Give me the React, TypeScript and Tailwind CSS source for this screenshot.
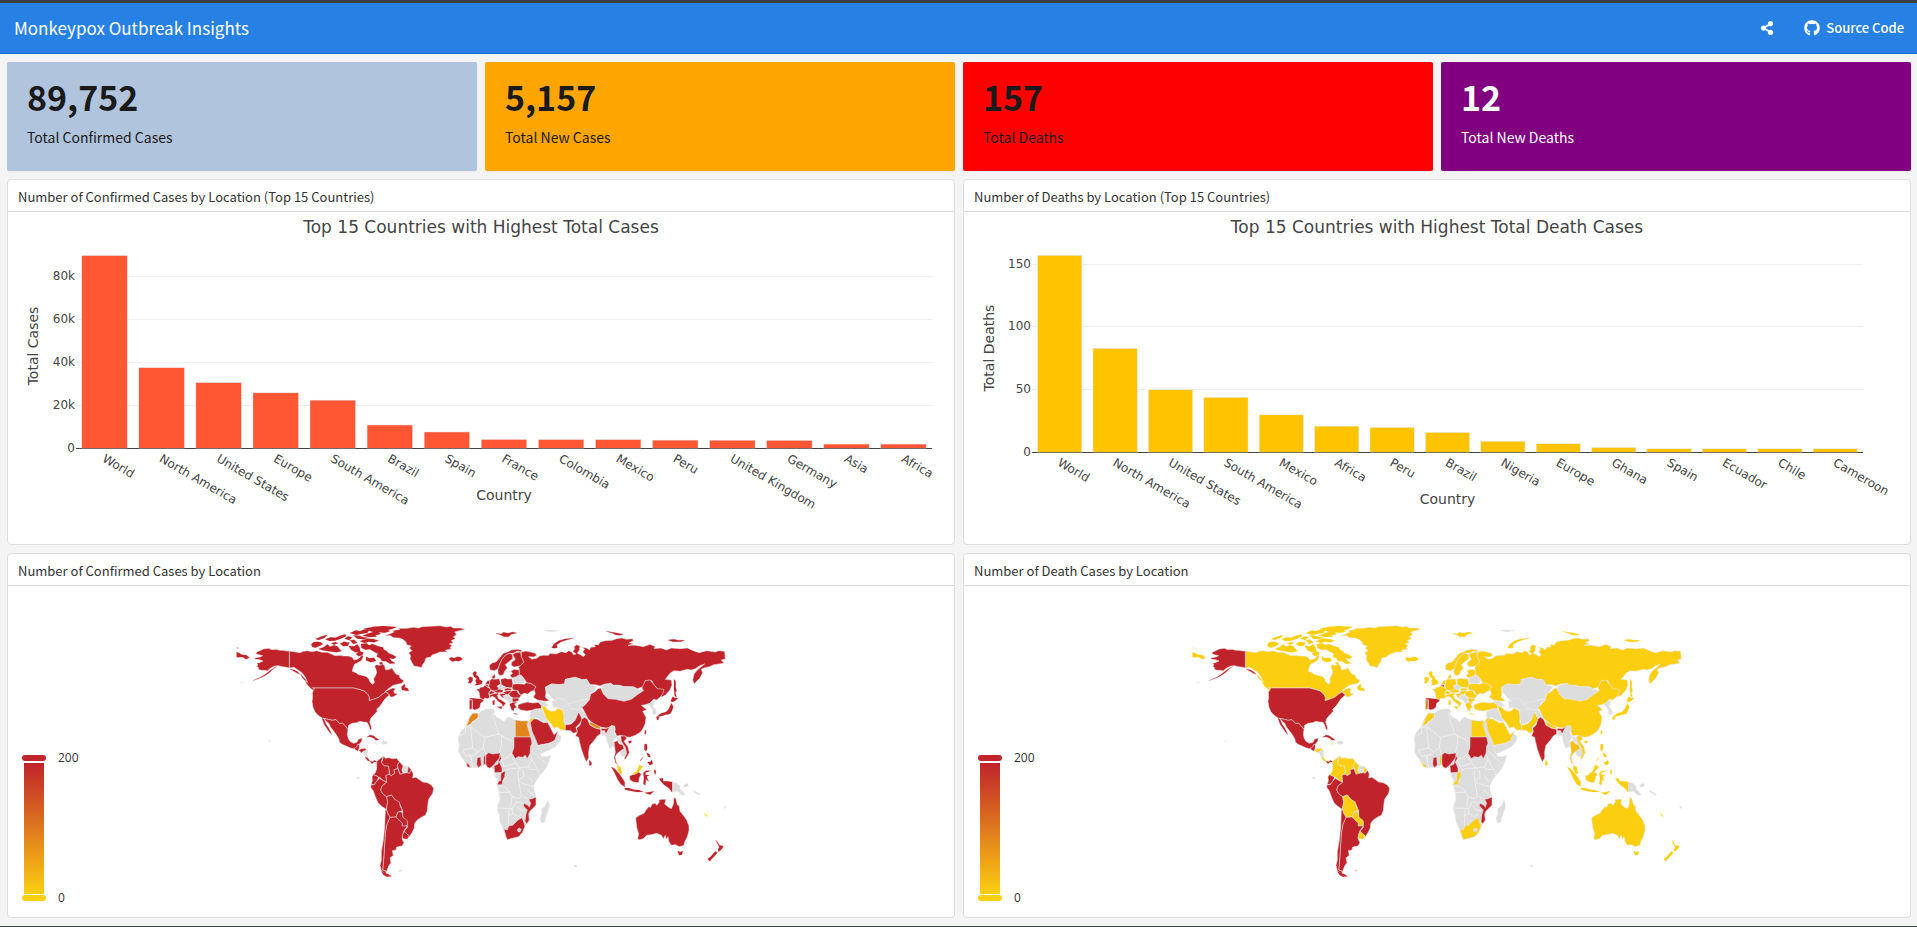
import React from "react";
import { FaGithub, FaShareAlt } from "react-icons/fa";

type Bar = [label: string, value: number];

const stats = [
  { value: "89,752", label: "Total Confirmed Cases", tone: "bg-[#b0c4de] text-[#1a1a1a]" },
  { value: "5,157", label: "Total New Cases", tone: "bg-[#ffa500] text-[#1a1a1a]" },
  { value: "157", label: "Total Deaths", tone: "bg-[#ff0000] text-[#1a1a1a]" },
  { value: "12", label: "Total New Deaths", tone: "bg-[#800080] text-white" },
];

const caseBars: Bar[] = [
  ["World", 89752], ["North America", 37600], ["United States", 30700], ["Europe", 25900],
  ["South America", 22500], ["Brazil", 10950], ["Spain", 7700], ["France", 4250],
  ["Colombia", 4190], ["Mexico", 4160], ["Peru", 3910], ["United Kingdom", 3870],
  ["Germany", 3800], ["Asia", 2080], ["Africa", 2070],
];

const deathBars: Bar[] = [
  ["World", 157], ["North America", 83], ["United States", 50], ["South America", 44],
  ["Mexico", 30], ["Africa", 21], ["Peru", 20], ["Brazil", 16], ["Nigeria", 9],
  ["Europe", 7], ["Ghana", 4], ["Spain", 3], ["Ecuador", 3], ["Chile", 3], ["Cameroon", 3],
];

interface BarChartProps {
  title: string;
  yTitle: string;
  bars: Bar[];
  ticks: [text: string, value: number][];
  color: string;
  left: number;
  right: number;
  base: number;
  unit: number;
}

function BarChart({ title, yTitle, bars, ticks, color, left, right, base, unit }: BarChartProps) {
  const pitch = (right - left) / bars.length;
  return (
    <svg
      viewBox="0 0 946 330"
      className="block h-auto w-full font-['Verdana','DejaVu_Sans',sans-serif]"
      fill="#444"
      role="img"
      aria-label={title}
    >
      <text x="473" y="21" fontSize="17" textAnchor="middle">{title}</text>
      {ticks.map(([text, value]) => {
        const y = Math.round(base - value * unit);
        return (
          <g key={text}>
            {value > 0 && <rect x={left} y={y} width={right - left} height="1" fill="#eee" />}
            <text x={left - 1} y={y + 4} fontSize="12" textAnchor="end">{text}</text>
          </g>
        );
      })}
      <rect x={left} y={base} width={right - left} height="1" fill="#444" />
      {bars.map(([label, value], i) => {
        const x = left + i * pitch;
        return (
          <g key={label}>
            <rect
              x={x + pitch * 0.1}
              y={base + 0.5 - value * unit}
              width={pitch * 0.8}
              height={value * unit}
              fill={color}
              stroke="#e5ecf6"
              strokeWidth="0.5"
            />
            <text transform={`translate(${x + pitch / 2 - 3} ${base + 13}) rotate(30)`} fontSize="12">
              {label}
            </text>
          </g>
        );
      })}
      <rect x={left} y={base} width={right - left} height="1" fill="#444" fillOpacity="0.6" />
      <text x={(left + right) / 2} y={base + 52} fontSize="14" textAnchor="middle">Country</text>
      <text transform={`translate(30 ${base / 2 + 16}) rotate(-90)`} fontSize="14" textAnchor="middle">
        {yTitle}
      </text>
    </svg>
  );
}

const fills: Record<string, string> = {
  r: "#c1232b",
  y: "#fcce10",
  o: "#e2861b",
  a: "#f9bd13",
  g: "#dddddd",
};

/* Each shape: outline, case level, death level. */
type Shape = [outline: string, cases: string, deaths: string];

const americas: Shape[] = [
  // Canada
  ["M208 123L222 125 240 128 250 124 262 122 276 125 290 122 306 127 322 127 336 133 345 137 360 136 372 138 385 138 397 142 402 150 412 148 420 142 426 134 430 140 424 152 410 160 404 162 399 174 397 184 408 188 414 193 430 197 440 200 447 208 450 216 458 223 463 218 461 205 466 198 470 188 468 178 464 170 468 164 478 166 488 162 494 168 497 180 508 178 516 174 522 184 528 192 538 196 540 204 552 212 546 220 532 223 520 226 508 234 494 246 505 240 518 234 527 236 521 244 524 250 534 252 520 260 512 262 508 254 498 246 488 252 476 262 460 268 447 272 448 262 444 254 434 244 420 239 400 234 284 234 272 230 262 216 256 202 246 188 234 180 222 172 208 174Z", "r", "y"],
  // Alaska
  ["M208 123L200 123 190 121 180 121 168 118 156 119 145 115 130 117 122 121 112 125 107 130 115 134 128 137 120 141 106 143 104 147 118 149 129 153 118 158 110 160 114 165 110 169 116 173 114 178 124 181 134 181 142 183 148 177 156 172 164 168 176 167 186 170 195 171 208 174Z", "r", "r"],
  // Greenland
  ["M494 77L508 72 522 66 516 62 540 58 534 55 560 55 580 52 596 54 606 50 630 49 660 47 680 51 692 49 700 54 722 54 735 58 718 62 704 66 710 74 700 80 706 86 694 92 700 98 688 102 696 106 690 114 697 116 676 121 682 126 660 126 648 131 638 134 632 141 618 144 614 156 608 164 604 173 594 170 582 168 576 158 570 146 572 138 566 128 576 122 568 114 574 108 560 104 558 96 548 88 536 84 520 83 512 77Z", "r", "y"],
  // United States
  ["M284 234L400 234 420 239 434 244 444 254 448 262 447 272 460 268 476 262 488 252 498 246 508 255 500 262 494 268 486 280 480 288 476 292 470 298 472 304 462 314 452 326 449 336 454 350 455 360 450 358 446 346 441 337 430 336 420 334 410 338 396 340 386 346 384 358 376 348 368 340 358 340 348 329 336 331 325 328 316 326 306 324 300 320 290 312 284 304 279 292 276 275 278 262 277 248Z", "r", "r"],
  // Mexico
  ["M312 326L325 328 336 331 348 329 358 340 368 340 376 348 384 358 382 374 385 386 390 394 400 400 411 397 415 388 427 384 425 394 420 401 413 405 412 415 404 417 392 414 380 409 366 403 358 396 357 388 350 376 340 362 332 352 326 340 318 333Z", "r", "r"],
  // Central America
  ["M403 414L410 411 412 404 418 403 418 414 414 424 406 420Z", "r", "r"],
  ["M416 420L424 416 434 415 441 420 430 424 424 429Z", "r", "y"],
  ["M428 427L441 419 443 432 442 442 436 441Z", "g", "g"],
  // Colombia
  ["M470 455L476 449 484 443 491 438 486 448 485 458 492 467 505 468 508 480 507 495 498 496 500 517 490 512 480 503 470 498 460 494 466 488 470 476Z", "r", "y"],
  // Venezuela and the Guianas
  ["M491 438L496 445 506 443 518 446 530 445 538 455 532 466 534 476 522 479 524 490 514 497 508 493 508 480 505 468 492 467 485 458Z", "r", "y"],
  ["M538 455L550 468 546 480 550 490 540 493 536 480 532 466Z", "r", "y"],
  ["M550 468L565 469 562 488 550 490 546 480Z", "g", "g"],
  ["M565 469L574 480 568 490 562 488Z", "r", "y"],
  // Ecuador, Peru
  ["M456 500L460 494 470 498 476 503 470 514 462 525 454 522 457 512Z", "r", "r"],
  ["M453 524L462 525 470 514 478 505 490 512 500 517 486 528 482 540 488 551 500 560 503 575 499 598 485 589 474 578 466 560 460 543 452 532Z", "r", "r"],
  // Brazil
  ["M498 496L508 493 514 497 524 490 522 479 534 476 540 493 550 490 562 488 568 490 574 480 580 492 578 504 588 502 600 510 608 516 622 518 634 525 641 535 638 550 626 568 624 580 622 602 616 616 604 622 592 630 584 640 583 654 576 668 568 680 552 664 562 652 561 638 548 630 548 602 538 580 524 568 514 555 500 560 488 551 482 540 486 528 500 517Z", "r", "r"],
  // Bolivia, Paraguay
  ["M500 560L514 555 524 568 538 576 541 590 548 602 534 606 528 621 510 622 504 612 499 598 503 575Z", "r", "y"],
  ["M534 606L546 606 549 622 562 632 562 644 554 651 546 648 547 640 528 621Z", "r", "y"],
  // Argentina, Uruguay
  ["M510 622L528 621 547 640 546 648 562 648 552 662 548 674 546 686 552 698 546 708 530 711 528 720 517 722 520 736 510 744 513 758 506 768 500 784 488 780 490 760 492 735 494 700 496 670 500 645Z", "r", "r"],
  ["M552 664L568 678 562 688 548 686 547 676Z", "r", "y"],
  // Chile
  ["M496 600L499 598 504 612 510 622 500 645 496 670 494 700 492 735 490 760 488 780 500 785 496 792 484 782 480 766 484 750 484 725 490 690 494 650Z", "r", "r"],
];

const americanIslands: Shape[] = [
  ["M50 126L58 130 66 134 80 136 88 143 78 148 68 141 50 142Z", "r", "y"],
  ["M50 113L56 114 52 115Z", "r", "y"],
  // Aleutians and the Alaska panhandle
  ["M170 169L156 180 150 187 138 195 126 202 98 212 122 202 137 192 152 180Z", "r", "r"],
  ["M210 177L222 179 233 185 240 193 232 190 222 184Z", "r", "r"],
  ["M60 218L72 216 66 219Z", "g", "g"],
  // Pacific coast of Canada
  ["M242 192L252 204 260 212 254 211 246 202Z", "r", "y"],
  ["M256 214L270 222 284 241 274 236 264 226Z", "r", "y"],
  // Newfoundland
  ["M544 231L553 222 556 228 552 232 562 234 567 243 560 242 546 240Z", "r", "y"],
  // Baffin
  ["M423 102L440 100 447 106 458 102 474 109 488 112 492 119 500 123 506 130 518 134 529 141 520 147 508 144 514 152 526 160 510 161 498 154 486 153 480 144 470 140 474 131 462 125 450 118 436 119 424 113Z", "r", "y"],
  // Victoria and Banks
  ["M274 103L280 97 290 95 302 97 309 102 298 108 286 113 276 110Z", "r", "y"],
  ["M296 117L312 111 322 103 330 110 342 106 352 109 358 117 365 123 350 127 336 125 322 123 308 121Z", "r", "y"],
  // Parry Islands
  ["M286 87L306 79 322 75 314 83 296 90Z", "r", "y"],
  ["M316 88L332 82 346 83 360 77 376 73 378 79 362 86 344 92 328 93Z", "r", "y"],
  ["M334 100L346 96 354 100 342 104Z", "r", "y"],
  ["M360 101L372 95 388 98 384 107 370 109Z", "r", "y"],
  ["M386 108L402 109 412 103 419 113 421 125 406 127 394 120Z", "r", "y"],
  ["M408 132L418 124 430 127 428 135 416 139Z", "r", "y"],
  ["M438 140L448 145 462 143 468 153 452 157 438 151Z", "r", "y"],
  ["M478 158L486 156 488 162 480 163Z", "r", "y"],
  // Ellesmere and its neighbours
  ["M390 69L408 61 420 64 434 58 448 60 442 69 424 71 410 75Z", "r", "y"],
  ["M432 56L460 50 490 48 530 51 516 57 504 60 510 64 494 68 476 67 482 72 466 76 470 80 448 81 428 77 446 70 460 66 448 62Z", "r", "y"],
  ["M400 76L418 77 428 81 446 84 430 88 412 86Z", "r", "y"],
  ["M420 94L430 89 444 86 460 87 476 92 462 97 446 95 434 99Z", "r", "y"],
  ["M390 91L402 89 412 98 400 102Z", "r", "y"],
  ["M374 86L384 79 396 82 388 91Z", "r", "y"],
  // Iceland
  ["M687 146L694 142 702 145 712 140 722 142 728 148 716 154 706 152 697 155 691 150Z", "r", "y"],
  // Baja California
  ["M306 325L312 328 318 342 326 354 336 374 328 366 320 354 312 342Z", "r", "r"],
  ["M435 441L443 443 449 453 444 453Z", "r", "y"],
  ["M449 453L458 455 464 451 470 456 462 456 456 461Z", "r", "r"],
  // Caribbean
  ["M440 382L450 375 460 377 468 383 477 390 468 391 460 384 450 380Z", "r", "r"],
  ["M484 396L490 392 502 396 500 402 486 403Z", "g", "g"],
  ["M466 400L472 401 469 404Z", "g", "y"],
  // Tierra del Fuego, Falklands
  ["M484 784L496 790 504 792 514 799 500 800 490 794Z", "r", "r"],
  ["M534 783L540 779 547 781 540 785Z", "g", "g"],
  // Hawaii, Galapagos
  ["M146 391L151 394 148 397Z", "g", "g"],
  ["M408 502L416 502 418 506 410 505Z", "g", "g"],
];

const africa: Shape[] = [
  ["M68 308L85 311 95 302 108 297 130 297 134 304 131 312 140 322 152 328 162 335 168 326 176 321 196 330 220 334 238 332 244 350 256 376 262 400 268 424 275 440 290 440 302 436 298 452 288 474 270 496 260 510 252 525 252 540 258 560 258 586 240 603 238 618 237 634 228 644 222 660 208 679 196 684 172 688 162 664 158 650 150 636 148 615 142 598 144 585 150 566 148 548 142 524 143 508 136 500 134 484 126 472 108 464 92 470 82 472 62 474 48 460 34 440 25 424 28 406 24 386 32 366 46 350 54 328Z", "g", "g"],
];

const oldWorld: Shape[] = [
  // Morocco, Egypt, Sudan
  ["M68 310L84 310 85 321 78 328 66 336 62 343 48 348 54 338 58 324Z", "o", "y"],
  ["M196 330L214 333 232 332 236 346 230 340 242 381 196 381Z", "o", "y"],
  ["M192 381L242 381 246 400 242 408 240 430 232 446 226 436 218 442 204 440 196 446 186 430 192 412Z", "r", "r"],
  // West Africa
  ["M108 434L116 428 128 432 150 429 150 442 140 454 132 464 120 475 112 472 107 462Z", "r", "r"],
  ["M150 434L154 446 148 456 156 474 156 487 134 488 132 468 144 462Z", "r", "r"],
  ["M82 443L92 441 94 466 84 473 80 462Z", "r", "r"],
  ["M101 440L106 435 107 462 101 464Z", "r", "y"],
  ["M48 458L56 462 62 474 52 470Z", "r", "y"],
  ["M153 490L166 482 164 500 158 512 156 524 142 524 146 514 152 512Z", "r", "y"],
  // Southern Africa
  ["M236 568L246 566 258 561 258 585 250 594 240 603 236 612 238 630 230 642 225 634 228 612 232 600 220 588 222 580 234 586 238 592 242 580Z", "r", "r"],
  ["M162 657L172 660 176 648 188 646 204 630 216 623 221 636 225 648 218 666 206 680 190 684 172 689 168 680Z", "r", "y"],
  ["M202 658L208 654 214 658 210 666 204 665Z", "g", "g"],
  // France, Iberia
  ["M78 237L88 237 90 232 100 231 104 226 114 232 124 238 118 246 116 252 120 262 112 266 104 264 102 269 90 266 88 250 86 244Z", "r", "y"],
  ["M58 264L70 264 90 266 102 269 100 274 92 280 90 292 84 297 74 300 67 297 67 270 59 269Z", "r", "r"],
  ["M58 270L67 270 66 298 58 298Z", "r", "o"],
  ["M104 224L112 223 116 229 114 232Z", "r", "r"],
  ["M106 222L112 212 120 211 118 224Z", "r", "y"],
  // Germany, Denmark
  ["M120 211L126 206 134 208 148 206 152 222 142 228 148 238 138 244 124 241 116 229 118 222Z", "r", "y"],
  ["M126 200L134 192 136 198 134 206 127 206Z", "r", "y"],
  // Czechia, Poland
  ["M142 228L152 224 162 228 168 234 156 238 148 238Z", "g", "g"],
  ["M152 208L166 204 172 207 186 206 188 218 189 228 184 234 168 232 154 224Z", "r", "y"],
  // Alps
  ["M134 243L148 238 160 240 158 247 142 249 132 246Z", "r", "y"],
  ["M116 248L124 242 134 246 128 252 118 253Z", "r", "y"],
  // Italy
  ["M119 256L128 252 142 249 148 252 142 256 146 266 154 270 168 280 164 284 158 292 156 283 144 274 134 262 126 259 120 263Z", "r", "y"],
  // Central Europe and the Balkans
  ["M162 238L172 234 186 236 184 240 166 243Z", "r", "y"],
  ["M160 246L170 243 182 241 184 246 172 254 162 251Z", "r", "y"],
  ["M148 252L162 250 170 256 158 257 168 268 154 261Z", "r", "y"],
  ["M160 258L172 255 180 259 186 268 184 278 178 280 174 272 164 267Z", "g", "g"],
  ["M176 252L186 242 200 240 206 252 214 255 208 264 190 264 182 260Z", "r", "y"],
  ["M186 265L206 264 206 272 196 276 188 276Z", "r", "y"],
  ["M178 282L188 277 202 276 194 282 200 292 192 296 192 304 184 300Z", "r", "y"],
  // Ukraine, Belarus, Baltics
  ["M189 222L206 221 222 223 230 218 242 220 258 230 254 240 240 246 234 252 222 250 212 256 204 242 190 240 186 234Z", "r", "y"],
  ["M190 206L202 196 214 196 224 208 220 220 206 221 190 219Z", "g", "g"],
  ["M180 196L188 190 182 184 192 178 208 180 208 194 198 200 186 204Z", "r", "y"],
  // Nordics
  ["M118 166L128 158 138 156 150 142 160 130 172 126 184 120 200 118 214 120 216 126 200 124 190 130 178 130 166 136 156 148 150 160 144 176 134 182 120 180Z", "r", "y"],
  ["M144 178L150 160 156 148 166 136 178 130 188 134 188 146 176 156 166 164 172 174 164 184 160 194 150 197 144 190Z", "r", "y"],
  ["M188 134L196 128 212 126 214 140 222 156 210 168 192 171 184 166 184 158 196 148Z", "r", "y"],
  // Russia
  ["M214 126L228 123 242 126 256 130 260 136 252 141 236 140 246 148 262 144 268 138 280 136 296 136 300 130 318 132 334 125 348 128 356 122 366 126 370 134 378 132 368 124 374 118 372 110 380 104 390 108 388 120 382 130 392 134 400 140 406 134 398 126 404 118 396 112 410 114 418 120 422 112 436 110 432 104 446 104 450 96 466 92 486 91 500 86 516 84 530 88 548 86 550 92 538 98 552 102 534 106 556 106 580 110 600 103 616 110 612 116 632 114 650 120 664 114 690 116 712 114 730 122 748 128 770 122 796 126 806 122 824 124 826 147 814 150 822 160 806 162 792 164 778 170 762 174 754 178 758 188 750 204 740 214 732 222 728 210 732 192 742 180 754 170 764 162 748 168 736 176 724 180 712 178 690 184 672 182 660 190 646 208 664 210 666 224 660 240 646 256 632 262 638 246 622 236 610 222 606 212 586 212 580 230 562 236 550 230 536 230 520 230 510 226 490 226 484 221 464 222 450 228 436 224 420 224 410 208 396 209 376 202 346 208 344 222 326 224 304 222 286 232 288 248 286 262 298 272 284 274 262 270 250 262 256 250 252 240 258 230 242 220 230 218 224 208 214 196 208 194 208 180 206 172 222 156 214 140Z", "r", "y"],
  // Turkey, Caucasus
  ["M204 284L216 280 232 276 248 279 264 277 274 284 274 296 256 297 246 301 230 303 212 300 204 294Z", "r", "y"],
  ["M262 271L284 275 296 288 284 288 272 284Z", "g", "g"],
  // Levant and Iraq
  ["M242 306L256 298 274 296 280 308 288 320 296 336 276 332 256 322 244 328 240 318Z", "g", "g"],
  ["M238 332L242 326 250 323 250 332 240 340Z", "y", "y"],
  // Arabia
  ["M241 338L252 326 262 328 280 338 292 337 300 350 306 362 312 374 324 364 320 380 314 392 296 400 264 406 256 386 246 364Z", "r", "y"],
  ["M264 407L296 401 304 416 284 426 268 432Z", "g", "g"],
  ["M296 401L314 392 322 370 334 380 330 394 316 410 304 416Z", "g", "g"],
  // Iran
  ["M274 287L286 290 292 298 304 304 318 302 322 294 338 300 343 318 341 336 348 348 347 361 332 360 324 352 310 354 302 340 288 324 282 308Z", "y", "y"],
  // Central Asia
  ["M286 232L304 222 326 224 344 222 346 208 376 202 396 209 410 208 420 224 440 230 432 244 420 252 418 266 400 268 386 274 372 276 352 282 342 268 322 264 316 274 304 262 290 246Z", "g", "g"],
  ["M306 272L316 274 322 264 342 268 356 286 372 300 348 306 338 298 322 292 310 294Z", "g", "g"],
  ["M342 268L352 282 372 276 400 270 418 268 398 290 396 300 376 298 364 294Z", "g", "g"],
  ["M340 302L362 296 376 298 396 300 384 312 376 330 362 340 344 342Z", "g", "g"],
  ["M386 298L398 302 414 322 412 330 396 324 392 316Z", "g", "g"],
  // Mongolia
  ["M452 234L464 224 482 220 490 226 510 226 520 230 536 230 552 232 562 238 580 242 562 254 544 268 522 274 496 268 474 266 460 252Z", "g", "g"],
  // China
  ["M396 292L404 286 418 270 422 252 434 246 444 236 452 234 460 252 474 266 496 268 522 274 544 268 562 254 580 242 576 234 586 212 600 210 610 222 622 236 642 238 638 252 630 262 620 270 610 268 600 280 586 284 574 286 584 294 590 300 578 304 588 322 586 340 580 354 572 366 556 376 540 382 526 380 512 376 500 378 494 364 488 350 470 354 456 352 440 348 424 336 414 326 408 314Z", "r", "y"],
  // Pakistan, India, Nepal
  ["M346 345L364 342 376 330 386 306 394 322 396 330 388 342 378 352 382 366 370 370 362 362 346 361Z", "r", "y"],
  ["M396 326L404 322 414 330 420 346 436 354 452 358 452 372 442 378 432 392 420 406 416 424 416 444 409 456 402 440 394 418 388 394 386 382 376 378 382 366 380 354 390 346Z", "r", "r"],
  ["M454 355L468 356 484 349 474 362 468 374 464 362 454 362Z", "r", "r"],
  ["M420 335L434 342 452 352 450 357 436 353 420 344Z", "o", "y"],
  ["M454 362L464 366 468 378 456 376Z", "g", "g"],
  // Southeast Asia
  ["M468 374L476 356 484 346 494 348 496 358 492 370 500 380 490 392 494 414 488 408 480 416 472 396Z", "g", "g"],
  ["M500 380L514 384 520 398 530 410 532 428 524 440 514 438 508 424 520 420 514 402 502 392Z", "g", "g"],
  ["M492 396L502 392 508 402 518 404 522 416 510 424 500 432 496 440 498 454 504 466 496 458 492 444 496 426Z", "r", "a"],
  ["M512 378L526 378 530 386 522 394 534 410 538 428 528 446 522 448 530 430 526 412 514 394Z", "r", "y"],
  ["M538 498L548 494 556 492 566 486 574 492 568 504 566 518 550 516 540 510Z", "r", "y"],
  ["M666 516L680 520 690 528 690 536 706 554 696 556 682 544 666 546Z", "g", "g"],
  // Korea
  ["M594 284L604 276 612 272 612 284 608 290 616 296 620 308 614 314 608 312 608 300 602 292Z", "g", "g"],
  // Australia
  ["M557 624L568 616 582 610 588 600 596 590 602 592 606 582 616 580 620 586 628 576 626 570 636 568 648 568 644 582 656 592 664 596 670 582 672 562 678 566 682 584 688 588 690 604 700 616 710 630 717 648 717 662 712 680 704 696 702 706 688 710 676 704 664 706 656 694 654 680 648 688 646 676 640 686 634 676 620 670 604 674 590 676 580 686 566 690 563 684 566 672 560 652Z", "r", "y"],
];

const oldWorldIslands: Shape[] = [
  // Madagascar
  ["M294 570L299 586 294 604 288 620 284 636 274 638 270 626 276 610 275 596 286 588Z", "g", "g"],
  // British Isles
  ["M68 190L74 184 80 187 78 194 86 200 88 208 97 214 95 222 84 225 74 226 80 220 76 212 80 206 72 200Z", "r", "y"],
  ["M54 206L60 200 68 203 68 212 62 220 54 219 58 212Z", "r", "y"],
  // Mediterranean
  ["M142 290L156 290 154 297Z", "r", "y"],
  ["M128 272L134 271 133 284 128 284Z", "r", "y"],
  ["M190 310L204 312 196 313Z", "r", "y"],
  // Arctic Ocean
  ["M305 113L312 102 326 92 344 87 372 84 350 90 334 95 320 104 322 113 312 115Z", "r", "y"],
  ["M468 64L484 66 496 68 520 73 508 76 496 74 488 70Z", "r", "y"],
  ["M654 90L672 88 684 91 704 91 692 95 668 95Z", "r", "y"],
  ["M138 70L154 72 160 67 174 70 188 66 200 69 184 73 176 80 162 80 154 76Z", "r", "y"],
  ["M280 62L300 60 326 62 304 65Z", "g", "g"],
  // Sakhalin and Japan
  ["M672 208L677 214 677 232 680 242 676 248 680 262 674 258 672 236Z", "r", "y"],
  ["M662 274L668 260 676 264 684 264 676 272 668 276Z", "r", "y"],
  ["M664 280L670 290 666 302 660 312 646 314 636 318 620 320 634 310 648 306 656 298Z", "r", "y"],
  ["M620 320L628 321 624 331 620 328Z", "r", "y"],
  // Hainan, Sri Lanka, Taiwan
  ["M534 394L544 392 544 398 538 400Z", "r", "y"],
  ["M418 450L425 458 424 466 418 466Z", "r", "y"],
  ["M586 360L589 362 587 374 584 370Z", "r", "y"],
  // Malaysia
  ["M502 466L512 472 516 492 508 490 503 478Z", "y", "y"],
  ["M548 492L560 484 568 464 578 470 566 486 552 494Z", "y", "y"],
  // Indonesia
  ["M484 471L494 476 508 492 518 506 524 516 524 530 512 522 502 506 494 488Z", "r", "y"],
  ["M524 534L536 534 552 539 566 540 580 546 560 546 540 542 526 539Z", "r", "y"],
  ["M580 488L588 482 602 482 586 488 586 494 598 496 590 500 596 514 588 508 586 526 580 522 582 506Z", "r", "y"],
  ["M584 548L600 546 612 544 600 554Z", "r", "y"],
  ["M614 478L618 484 616 494 612 486Z", "r", "y"],
  ["M628 506L638 504 640 514 652 514 666 516 666 546 656 534 642 524 634 516Z", "r", "y"],
  // Melanesia
  ["M700 526L712 520 716 528 704 532Z", "g", "g"],
  ["M730 540L752 554 748 556 732 546Z", "g", "g"],
  ["M761 610L764 611 773 618 771 620Z", "y", "y"],
  ["M820 592L828 588 826 596Z", "g", "g"],
  // Philippines
  ["M584 402L590 402 592 414 588 424 583 418Z", "r", "y"],
  ["M590 428L598 432 602 442 594 440Z", "r", "y"],
  ["M592 456L600 456 606 450 608 462 600 466Z", "r", "y"],
  ["M570 452L580 440 574 450Z", "r", "y"],
  // Tasmania and New Zealand
  ["M683 722L690 726 698 724 696 734 688 736 686 732Z", "r", "y"],
  ["M797 690L804 698 808 706 820 708 816 716 806 726 804 718 808 712Z", "r", "y"],
  ["M796 724L802 728 794 738 784 748 780 754 773 748 784 738Z", "r", "y"],
  ["M372 766L380 766 380 771 374 770Z", "g", "g"],
];

const africanBorders =
  "M84 311L86 322 62 343 46 350M62 343L62 352 46 352 46 372 30 376M62 350L104 382 102 396M62 352L68 414 38 420M104 382L146 372 140 350 132 330 128 310M146 372L156 378 196 398 196 381M102 396L100 412 84 426 76 432 60 440M100 412L108 434M156 378L154 404 148 430M38 420L48 440 62 434 68 474M68 414L84 426M60 440L66 452M192 412L186 430 170 444 154 450M186 440L196 456 210 474 236 470 246 448 240 430M154 450L162 470 196 460M246 424L262 436 272 448 292 462M246 448L262 478 270 496M262 478L240 478 236 470M210 474L204 484 206 510 216 520 236 526 252 530M156 487L178 476 210 474M166 482L162 510 150 528 146 530M150 528L166 532 178 544 186 560 204 566 214 560 206 510M148 548L180 546M144 594L186 596 200 576 220 580M186 560L182 590M186 596L190 612 176 616 176 648M200 590L216 602 228 600M190 612L204 620 216 612M220 560L236 568M232 538L258 562M134 488L153 490M236 500L250 516M220 480L222 500 208 510M176 616L178 598";

function WorldMap({ metric }: { metric: "cases" | "deaths" }) {
  const level = metric === "cases" ? 1 : 2;
  const gradientId = `scale-${metric}`;
  const countries = (shapes: Shape[]) =>
    shapes.map((shape) => <path key={shape[0]} d={shape[0]} fill={fills[shape[level]]} />);
  const islands = (shapes: Shape[]) =>
    shapes.map((shape) => (
      <path key={shape[0]} d={shape[0]} fill={fills[shape[level]]} stroke={fills[shape[level]]} strokeWidth="0.6" />
    ));
  return (
    <svg
      viewBox="0 0 946 330"
      className="block h-auto w-full font-['Open_Sans','Noto_Sans',sans-serif]"
      role="img"
      aria-label={`World map of ${metric}`}
    >
      <defs>
        <linearGradient id={gradientId} x1="0" y1="0" x2="0" y2="1">
          <stop offset="0" stopColor="#c1232b" />
          <stop offset="1" stopColor="#fcce10" />
        </linearGradient>
      </defs>
      <g transform="translate(212 24) scale(.33333)" stroke="#e6e6e6" strokeWidth="1.6" strokeLinejoin="round">
        {countries(americas)}
        {islands(americanIslands)}
        <g transform="translate(690 0)">
          {countries(africa)}
          <path d={africanBorders} fill="none" stroke="#f4f4f4" strokeWidth="2" />
          {countries(oldWorld)}
          {islands(oldWorldIslands)}
        </g>
      </g>
      <rect x="16" y="177" width="20" height="131" fill={`url(#${gradientId})`} />
      <rect x="14" y="169" width="24" height="6" rx="3" fill="#c1232b" />
      <rect x="14" y="309" width="24" height="6" rx="3" fill="#fcce10" />
      <g fontSize="12" fill="#333">
        <text x="50" y="176">200</text>
        <text x="50" y="316">0</text>
      </g>
    </svg>
  );
}

function Panel({ title, children }: { title: string; children: React.ReactNode }) {
  return (
    <section className="overflow-hidden rounded-sm border border-[#dedede] bg-white">
      <h2 className="flex h-8 items-end border-b border-[#dedede] px-[10px] pb-1 text-[13px] leading-5 text-[#333]">
        {title}
      </h2>
      {children}
    </section>
  );
}

export default function App() {
  return (
    <div className="flex min-h-screen flex-col border-b border-[#3f4246] bg-[#f4f4f4] font-['Source_Sans_Pro','Noto_Sans_CJK_SC',sans-serif]">
      <header className="flex h-[54px] items-center justify-between border-t-3 border-b border-t-[#3c3f43] border-b-[#1967be] bg-[#2780e3] pr-[13px] pl-[14px] text-white">
        <h1 className="text-[17px] leading-6">Monkeypox Outbreak Insights</h1>
        <nav className="flex items-center gap-[30px]">
          <button type="button" aria-label="Share" className="cursor-pointer">
            <FaShareAlt size={14} />
          </button>
          <a href="#source" className="flex items-center gap-[6px] text-[13px] leading-6 font-medium">
            <FaGithub size={16} />
            Source Code
          </a>
        </nav>
      </header>
      <main className="flex flex-1 flex-col gap-2 py-2 pr-[6px] pl-[7px]">
        <div className="grid grid-cols-4 gap-2">
          {stats.map((s) => (
            <div key={s.label} className={`h-[109px] rounded-xs px-5 pt-[15px] shadow-xs ${s.tone}`}>
              <p className="text-[34px] leading-10 font-bold">{s.value}</p>
              <p className="pt-2 text-[14px] leading-6">{s.label}</p>
            </div>
          ))}
        </div>
        <div className="grid flex-1 grid-cols-2 gap-2">
          <Panel title="Number of Confirmed Cases by Location (Top 15 Countries)">
            <BarChart
              title="Top 15 Countries with Highest Total Cases"
              yTitle="Total Cases"
              bars={caseBars}
              ticks={[["0", 0], ["20k", 20000], ["40k", 40000], ["60k", 60000], ["80k", 80000]]}
              color="#ff5733"
              left={68}
              right={924}
              base={236}
              unit={0.00215}
            />
          </Panel>
          <Panel title="Number of Deaths by Location (Top 15 Countries)">
            <BarChart
              title="Top 15 Countries with Highest Total Death Cases"
              yTitle="Total Deaths"
              bars={deathBars}
              ticks={[["0", 0], ["50", 50], ["100", 100], ["150", 150]]}
              color="#ffc300"
              left={68}
              right={899}
              base={240}
              unit={1.256}
            />
          </Panel>
          <Panel title="Number of Confirmed Cases by Location">
            <WorldMap metric="cases" />
          </Panel>
          <Panel title="Number of Death Cases by Location">
            <WorldMap metric="deaths" />
          </Panel>
        </div>
      </main>
    </div>
  );
}
